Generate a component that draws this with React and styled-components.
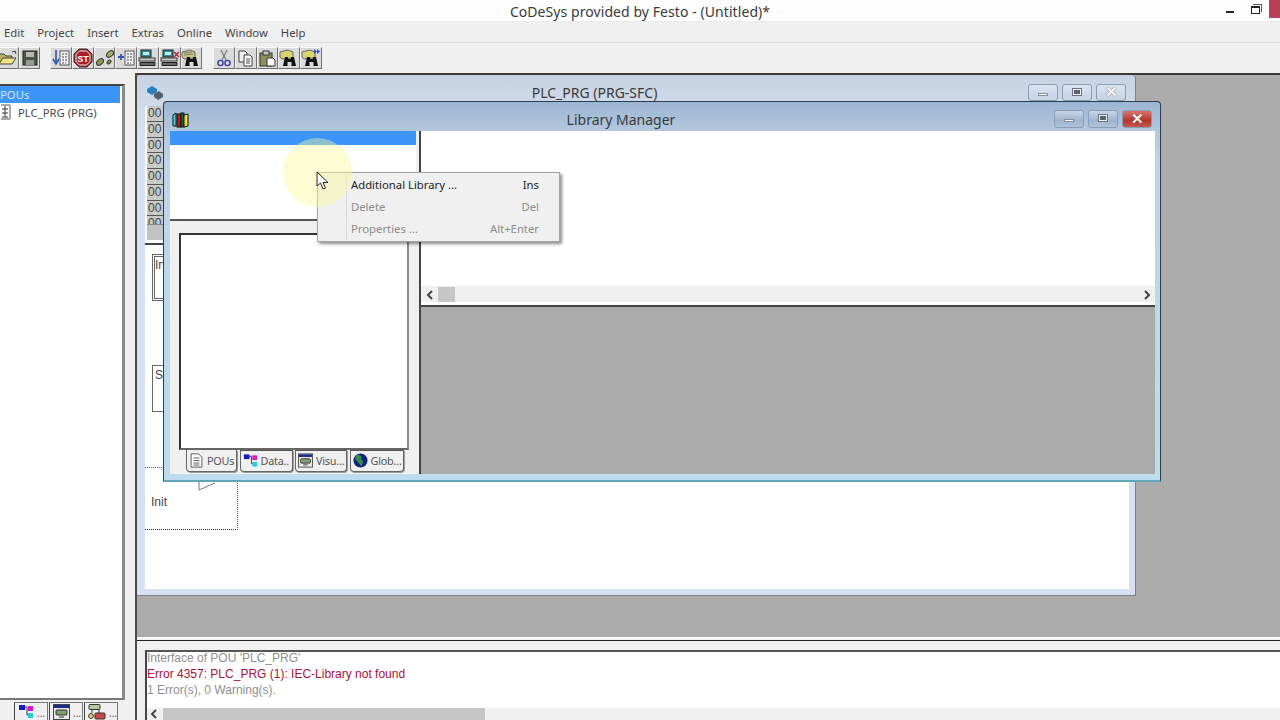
import React from 'react'
import styled, { createGlobalStyle } from 'styled-components'

const uiFont = `"Noto Sans", "Open Sans", sans-serif`
const arial = `"Liberation Sans", Arial, sans-serif`

const Global = createGlobalStyle`
  html, body { margin: 0; padding: 0; background: #f0f0f0; }
  * { box-sizing: border-box; }
  svg { flex: none; }
`
const Screen = styled.div`
  position: relative;
  width: 1280px;
  height: 720px;
  overflow: hidden;
  display: flex;
  flex-direction: column;
  font-family: ${uiFont};
  font-size: 11.3px;
  color: #3c3c3c;
  background: #f0f0f0;
`
const TitleBar = styled.div`
  position: relative;
  height: 22px;
  flex: none;
  display: flex;
  align-items: center;
  justify-content: center;
  padding-top: 1px;
  background: #fdfdfd;
  border-bottom: 1px solid #ebebee;
  font-size: 14px;
  letter-spacing: 0.07px;
  color: #3a3a3a;
`
const Controls = styled.div`
  position: absolute;
  top: 0;
  right: 0;
  display: flex;
  align-items: flex-start;
`
const MinGlyph = styled.div`
  width: 8px;
  height: 2px;
  margin: 11px 17px 0 0;
  background: #222;
`
const RestoreGlyph = styled.div`
  position: relative;
  width: 9px;
  height: 8px;
  margin: 6px 9px 0 0;
  border: 1px solid #222;
  border-width: 2px 1px 1px 1px;
  &::after {
    content: '';
    position: absolute;
    top: -4px;
    right: -3px;
    width: 8px;
    height: 7px;
    border: 1px solid #555;
    border-left: 0;
    border-bottom-width: 0;
  }
`
const CloseBox = styled.div`
  width: 11px;
  height: 18px;
  background: #b93f55;
`
const MenuBar = styled.div`
  height: 21px;
  flex: none;
  display: flex;
  align-items: center;
  gap: 13px;
  padding-left: 4px;
  background: #f0f0f0;
  border-bottom: 1px solid #dcdcdc;
`
const MenuItem = styled.span`
  color: #444;
`
const Toolbar = styled.div`
  height: 30px;
  flex: none;
  display: flex;
  align-items: flex-start;
  padding-top: 4px;
  background: #f0f0f0;
`
const ToolGroup = styled.div`
  display: flex;
  margin-left: ${p => p.$gap}px;
`
const ToolButton = styled.div`
  width: 21.7px;
  height: 22px;
  display: flex;
  align-items: center;
  justify-content: center;
  background: #dadada;
  border: 1px solid;
  border-color: #f4f4f4 #707070 #707070 #f4f4f4;
`
const Body = styled.div`
  flex: 1;
  min-height: 0;
  display: flex;
`
const Sidebar = styled.div`
  width: 137px;
  flex: none;
  display: flex;
  flex-direction: column;
  padding-top: 11px;
  background: #f0f0f0;
  border-right: 2px solid #4a4a4a;
`
const Tree = styled.div`
  width: 125px;
  height: 618px;
  padding-right: 2px;
  background: #fff;
  border-top: 2px solid #444;
  border-right: 3px solid #8a8a8a;
  border-bottom: 2px solid #777;
`
const TreeRoot = styled.div`
  height: 17px;
  line-height: 17px;
  background: #3c96f8;
  color: #d5e8ff;
`
const TreeItem = styled.div`
  display: flex;
  align-items: center;
  gap: 7px;
  height: 18px;
  color: #484848;
`
const SideTabs = styled.div`
  display: flex;
  gap: 1px;
  padding: 2px 0 0 14px;
`
const SideTab = styled.div`
  width: 34px;
  height: 18px;
  display: flex;
  gap: 3px;
  padding: 1px 0 0 3px;
  background: #f0f0f0;
  border: 1px solid #777;
  border-bottom: 0;
  border-left-color: #444;
  font-size: 10px;
  line-height: 18px;
  color: #555;
`
const Right = styled.div`
  flex: 1;
  min-width: 0;
  display: flex;
  flex-direction: column;
`
const Workspace = styled.div`
  position: relative;
  flex: 1;
  min-height: 0;
  background: #ababab;
  border-top: 2px solid #3a3a3a;
`
const PlcWindow = styled.div`
  position: absolute;
  left: 0;
  top: 0;
  width: 999px;
  height: 521px;
  display: flex;
  flex-direction: column;
  background: linear-gradient(#c7d3e2, #d7e0f0 60px);
  border-right: 1px solid #7d7d85;
  border-bottom: 1px solid #7d7d85;
  border-radius: 4px 4px 0 0;
`
const PlcTitle = styled.div`
  position: relative;
  height: 31px;
  flex: none;
  padding: 8px 83px 0 0;
  text-align: center;
  font-size: 14px;
  line-height: 20px;
  color: #3a3a3a;
`
const WindowIcon = styled.div`
  position: absolute;
  left: ${p => p.$left}px;
  top: ${p => p.$top}px;
  line-height: 0;
`
const WinButtons = styled.div`
  position: absolute;
  top: ${p => p.$top}px;
  right: ${p => p.$right}px;
  display: flex;
  gap: 4px;
`
const WinButton = styled.div`
  width: 30px;
  height: ${p => p.$h}px;
  display: flex;
  align-items: center;
  justify-content: center;
  border: 1px solid #8b9db3;
  border-radius: 3px;
  background: ${p => (p.$close
    ? 'linear-gradient(#d9736b, #b5352c 60%, #c55a50)'
    : p.$faded ? 'linear-gradient(#dbe4f0, #c4d2e4)' : 'linear-gradient(#c8d6e8, #9db4cf 60%, #b0c3da)')};
`
const MinMark = styled.div`
  width: 10px;
  height: 3px;
  margin-top: 3px;
  background: #f3f4f6;
  border: 1px solid #8a909a;
`
const MaxMark = styled.div`
  width: 10px;
  height: 8px;
  margin-top: -2px;
  border: 2px solid #eef0f3;
  outline: 1px solid #6a7180;
  outline-offset: -1px;
  background: #5a6270;
`
const XMark = styled.span`
  margin-top: -2px;
  font-family: ${arial};
  font-size: 15px;
  font-weight: bold;
  line-height: 1;
  color: ${p => (p.$faded ? '#fff' : '#f4f4f4')};
  text-shadow: 0 0 1px ${p => (p.$faded ? '#222' : '#444')};
`
const PlcClient = styled.div`
  position: relative;
  flex: 1;
  margin: 0 6px 6px 8px;
  background: #fff;
  display: flex;
  flex-direction: column;
`
const LineNumbers = styled.div`
  width: 60px;
  margin-left: 2px;
  height: 118px;
  overflow: hidden;
  background: #c9c9c9;
`
const LineNumber = styled.div`
  height: 15.75px;
  line-height: 14px;
  padding-left: 1px;
  font-family: ${arial};
  font-size: 12px;
  color: #444;
  border-bottom: 1px solid #555;
`
const GutterFoot = styled.div`
  width: 60px;
  height: 16px;
  margin-left: 2px;
  background: #c2c2c2;
  border-top: 1px solid #888;
`
const NumberRule = styled.div`
  height: 2px;
  margin-top: 3px;
  background: #444;
`
const StepBox = styled.div`
  position: absolute;
  left: 7px;
  top: ${p => p.$top}px;
  width: 40px;
  height: 47px;
  padding: ${p => (p.$initial ? '1px 0 0 0' : '2px 0 0 2px')};
  border: ${p => (p.$initial ? '3px double #666' : '1px solid #666')};
  font-family: ${arial};
  font-size: 12px;
  color: #444;
`
const InitStep = styled.div`
  position: absolute;
  left: 0;
  top: 361px;
  width: 93px;
  height: 63px;
  padding: 27px 0 0 6px;
  border-top: 1px dotted #555;
  border-right: 1px dotted #555;
  border-bottom: 1px dotted #333;
  font-family: ${arial};
  font-size: 12px;
  color: #444;
`
const StepMark = styled.div`
  position: absolute;
  left: 45px;
  top: 374px;
  line-height: 0;
`
const LibWindow = styled.div`
  position: absolute;
  left: 26px;
  top: 26px;
  width: 998px;
  height: 381px;
  display: flex;
  flex-direction: column;
  background: linear-gradient(#9cb5d2, #b4c8de 30px, #bcd4ec 60px, #bddcee);
  border: 1px solid #2b3d4a;
  border-bottom: 2px solid #5fa7b8;
  border-radius: 4px 4px 0 0;
`
const LibTitle = styled.div`
  position: relative;
  height: 29px;
  flex: none;
  padding: 8px 82px 0 0;
  text-align: center;
  font-size: 14px;
  line-height: 20px;
  color: #3a3a3a;
`
const LibClient = styled.div`
  flex: 1;
  min-height: 0;
  margin: 0 5px 6px 6px;
  display: flex;
  background: #f0f0f0;
`
const LibLeft = styled.div`
  width: 251px;
  flex: none;
  display: flex;
  flex-direction: column;
  border-right: 2px solid #444;
`
const LibTree = styled.div`
  width: 246px;
  height: 90px;
  flex: none;
  background: #fff;
  border-bottom: 2px solid #555;
`
const SelectedRow = styled.div`
  height: 14px;
  background: #3c96f8;
`
const LibList = styled.div`
  width: 230px;
  height: 217px;
  margin: 12px 0 0 9px;
  background: #fff;
  border: 2px solid;
  border-color: #333 #8a8a8a #666 #333;
`
const LibTabs = styled.div`
  display: flex;
  gap: 2.5px;
  padding-left: 16px;
`
const LibTab = styled.div`
  width: ${p => p.$w}px;
  height: 22px;
  display: flex;
  align-items: center;
  gap: 3px;
  padding: 0 0 1px 2px;
  overflow: hidden;
  white-space: nowrap;
  font-size: 10.8px;
  letter-spacing: -0.2px;
  color: #555;
  background: #f0f0f0;
  border: 1px solid #666;
  border-top: ${p => (p.$active ? '0' : '1px solid #555')};
  border-radius: 0 0 4px 4px;
  box-shadow: 1px 1px 0 #999;
  svg {
    width: 15px;
    height: 15px;
  }
`
const LibRight = styled.div`
  flex: 1;
  min-width: 0;
  display: flex;
  flex-direction: column;
  background: #ababab;
`
const LibDetail = styled.div`
  height: 155px;
  flex: none;
  background: #fff;
`
const ScrollStrip = styled.div`
  height: 21px;
  flex: none;
  display: flex;
  align-items: center;
  justify-content: space-between;
  padding: 1px 4px 3px 5px;
  background: linear-gradient(#f0f0f0 16px, #fff 16px);
  border-bottom: 2px solid #444;
  line-height: 0;
`
const ThumbGroup = styled.div`
  display: flex;
  gap: 4px;
  align-items: center;
`
const HThumb = styled.div`
  width: 17px;
  height: 15px;
  background: #c6c6c6;
`
const Divider = styled.div`
  height: 5px;
  flex: none;
  background: linear-gradient(#ababab 1px, #fafafa 1px, #fafafa 3px, #f0f0f0 3px);
  border-bottom: 1px solid #222;
`
const MessagePane = styled.div`
  height: 79px;
  flex: none;
  padding: 9px 0 0 8px;
  background: #f0f0f0;
`
const MessageBox = styled.div`
  height: 100%;
  display: flex;
  flex-direction: column;
  background: #fff;
  border-top: 2px solid #555;
  border-left: 2px solid #444;
`
const Messages = styled.div`
  flex: 1;
  margin-top: -2px;
  font-family: ${arial};
  font-size: 12px;
  line-height: 16px;
`
const Message = styled.div`
  color: ${p => (p.$error ? '#a8123a' : '#8f8f8f')};
`
const BottomScroll = styled.div`
  height: 12px;
  flex: none;
  display: flex;
  align-items: center;
  gap: 5px;
  padding-left: 3px;
  background: #f0f0f0;
`
const BottomThumb = styled.div`
  width: 322px;
  height: 12px;
  background: #c6c6c6;
`
const ContextMenu = styled.div`
  position: absolute;
  left: 317px;
  top: 172px;
  width: 243px;
  height: 70px;
  background: #f0f0f0;
  border: 1px solid #a4a4a4;
  box-shadow: 2px 2px 3px rgba(0, 0, 0, 0.45);
  &::before {
    content: '';
    position: absolute;
    left: 28px;
    top: 1px;
    bottom: 1px;
    width: 1px;
    background: #dcdcdc;
  }
`
const MenuRow = styled.div`
  height: 22px;
  display: flex;
  align-items: center;
  justify-content: space-between;
  padding: 0 20px 0 33px;
  color: ${p => (p.$disabled ? '#8c8c8c' : '#222')};
`
const Halo = styled.div`
  position: absolute;
  left: 283px;
  top: 138px;
  width: 69px;
  height: 69px;
  border-radius: 50%;
  background: radial-gradient(circle, rgba(250, 250, 150, 0.42) 78%, rgba(250, 250, 150, 0.05) 100%);
`
const Cursor = styled.svg`
  position: absolute;
  left: 316px;
  top: 171px;
`

const Open = () => (
  <svg width="20" height="16" viewBox="0 0 20 16">
    <path d="M14 2 L17 1 L18 4" fill="none" stroke="#333" />
    <path d="M1 4 H6 L8 6 H14 V13 H1 Z" fill="#b3b35a" stroke="#444" />
    <path d="M1 14 L5 8 H18 L14 14 Z" fill="#f2e484" stroke="#444" />
  </svg>
)
const Save = () => (
  <svg width="16" height="16" viewBox="0 0 16 16">
    <rect x="1" y="1" width="14" height="14" fill="#4a5545" stroke="#222" />
    <rect x="4" y="2" width="8" height="5" fill="#b8b8b0" />
    <rect x="4" y="10" width="8" height="5" fill="#9a9a92" />
  </svg>
)
const ListStep = ({ arrow }) => (
  <svg width="18" height="18" viewBox="0 0 18 18">
    <rect x="8" y="2" width="9" height="14" fill="#f4f4f4" stroke="#555" />
    <path d="M10 5h5M10 8h5M10 11h5M10 14h4" stroke="#444" strokeDasharray="2 1" />
    {arrow === 'down'
      ? <path d="M4 1 V13 M1 10 L4 15 L7 10" fill="none" stroke="#2f55b5" strokeWidth="1.6" />
      : <path d="M1 8 H7 M4 5 V11" stroke="#2f55b5" strokeWidth="1.8" />}
  </svg>
)
const Stop = () => (
  <svg width="20" height="20" viewBox="0 0 20 20">
    <path d="M6 1 H14 L19 6 V14 L14 19 H6 L1 14 V6 Z" fill="#a81e2a" stroke="#333" />
    <path d="M6.5 3 H13.5 L17 6.5 V13.5 L13.5 17 H6.5 L3 13.5 V6.5 Z" fill="none" stroke="#eee" />
    <text x="10" y="13.5" textAnchor="middle" fontSize="9" fontWeight="bold" fontFamily="Liberation Sans" fill="#fff">ST</text>
  </svg>
)
const Steps = () => (
  <svg width="20" height="18" viewBox="0 0 20 18">
    <ellipse cx="5" cy="13" rx="4" ry="2.6" transform="rotate(-40 5 13)" fill="#8c9a50" stroke="#333" />
    <ellipse cx="15" cy="5" rx="4" ry="2.6" transform="rotate(-40 15 5)" fill="#a7a96a" stroke="#333" />
    <ellipse cx="14" cy="13" rx="2.4" ry="1.6" transform="rotate(-40 14 13)" fill="#8c9a50" stroke="#333" />
  </svg>
)
const Machine = ({ cross }) => (
  <svg width="20" height="18" viewBox="0 0 20 18">
    <rect x="3" y="1" width="10" height="7" fill="#2f8f9a" stroke="#222" />
    <rect x="5" y="3" width="6" height="3" fill="#cde8ea" />
    <rect x="1" y="9" width="16" height="3" fill="#cfcfcf" stroke="#333" />
    <path d="M2 13.5h15v3H2z" fill="#666" stroke="#222" />
    {cross && <path d="M14 3 L19 8 M19 3 L14 8" stroke="#b52020" strokeWidth="1.4" />}
  </svg>
)
const Binoculars = ({ folder, next }) => (
  <svg width="20" height="20" viewBox="0 0 20 20">
    <path d="M1 4 L9 2 L14 4 V10 L3 11 L1 9 Z" fill={folder ? '#c9c77c' : '#d7d56c'} stroke="#666" />
    {folder && <path d="M3 5 L11 4 M3 7 L12 6" stroke="#777" />}
    <path d="M6 9 H9 V11 H12 V9 H15 L17 18 H12.5 V14 H8.5 V18 H4 Z" fill="#111" />
    {next && <path d="M13 1 V6 L16 3.5 Z M16 1 V6 L19 3.5 Z" fill="#2f4fb5" />}
  </svg>
)
const Scissors = () => (
  <svg width="16" height="18" viewBox="0 0 16 18">
    <path d="M5 1 L10 11 M11 1 L6 11" stroke="#777" strokeWidth="1.2" />
    <circle cx="4.5" cy="14" r="2.6" fill="none" stroke="#3a3a9c" strokeWidth="1.4" />
    <circle cx="11.5" cy="14" r="2.6" fill="none" stroke="#3a3a9c" strokeWidth="1.4" />
  </svg>
)
const Copy = () => (
  <svg width="17" height="17" viewBox="0 0 17 17">
    <path d="M2 1 H8 L10 3 V12 H2 Z" fill="#f0f0f0" stroke="#444" />
    <path d="M7 5 H13 L15 7 V16 H7 Z" fill="#fafafa" stroke="#444" />
    <path d="M9 9h4M9 11h4M9 13h4" stroke="#555" />
  </svg>
)
const Paste = () => (
  <svg width="17" height="17" viewBox="0 0 17 17">
    <rect x="1" y="3" width="12" height="13" fill="#8f8f58" stroke="#333" />
    <rect x="4" y="1" width="6" height="4" fill="#c8c8c8" stroke="#333" />
    <path d="M8 8 H14 L16 10 V16 H8 Z" fill="#fafafa" stroke="#333" />
  </svg>
)
const DiagramIcon = () => (
  <svg width="16" height="15" viewBox="0 0 16 15">
    <rect x="1" y="1" width="6" height="5" fill="#1818c8" />
    <rect x="10" y="2" width="5" height="5" fill="#d818c8" />
    <rect x="10" y="9" width="5" height="5" fill="#20d0d8" />
    <path d="M7 3 H9 V11 H10" fill="none" stroke="#333" />
  </svg>
)
const VisuIcon = () => (
  <svg width="17" height="16" viewBox="0 0 17 16">
    <rect x="0.5" y="0.5" width="16" height="15" fill="#e8e8e8" stroke="#444" />
    <rect x="1" y="1" width="15" height="3" fill="#1a2a8c" />
    <rect x="3" y="6" width="11" height="5" rx="1" fill="#7fa070" stroke="#333" />
    <path d="M6 13h5" stroke="#333" />
  </svg>
)
const GlobeIcon = () => (
  <svg width="17" height="17" viewBox="0 0 17 17">
    <circle cx="8.5" cy="8.5" r="8" fill="#12237e" />
    <path d="M5 2 C9 2 11 5 9 7 C12 8 12 12 9 15 C7 12 6 10 3 8 C2 5 3 3 5 2Z" fill="#2e8e50" />
  </svg>
)
const NetIcon = () => (
  <svg width="18" height="16" viewBox="0 0 18 16">
    <rect x="1" y="0.5" width="11" height="5" rx="1" fill="#b6c7a0" stroke="#333" />
    <rect x="7" y="9" width="10" height="6" rx="1" fill="#c84a4a" stroke="#333" />
    <circle cx="3" cy="12" r="2.4" fill="#e7d06a" stroke="#333" />
    <path d="M4 6 V9 M11 6 V9" stroke="#333" />
  </svg>
)
const PageIcon = () => (
  <svg width="15" height="18" viewBox="0 0 15 18">
    <path d="M1 1 H10 L14 5 V17 H1 Z" fill="#fafafa" stroke="#444" />
    <path d="M4 6h7M4 9h7M4 12h7M4 14.5h7" stroke="#444" />
  </svg>
)
const PrgIcon = () => (
  <svg width="11" height="16" viewBox="0 0 11 16">
    <path d="M1 1 H10 V15 H1" fill="#fff" stroke="#555" />
    <path d="M2 5 H8 M5 2 V13 M2 9 H8 M2 13 H8" stroke="#333" />
  </svg>
)
const BooksIcon = () => (
  <svg width="17" height="17" viewBox="0 0 17 17">
    <path d="M1 4 L4 2 V15 H1 Z" fill="#55d8d8" stroke="#111" />
    <rect x="5" y="3" width="4" height="13" fill="#b0202a" stroke="#111" />
    <rect x="9" y="2" width="3" height="14" fill="#1f6d2c" stroke="#111" />
    <path d="M12 4 L16 3 V15 L12 16 Z" fill="#ecdc3c" stroke="#111" />
  </svg>
)
const CubeIcon = () => (
  <svg width="18" height="16" viewBox="0 0 18 16">
    <path d="M8 9 L13 6 L17 9 L17 12 L12 15 L8 12 Z" fill="#55606e" />
    <path d="M1 4 L6 1 L11 4 L11 7 L6 10 L1 7 Z" fill="#2b7fc5" />
  </svg>
)
const ArrowLeft = () => (
  <svg width="8" height="10" viewBox="0 0 8 10">
    <path d="M6 1 L2 5 L6 9" fill="none" stroke="#444" strokeWidth="2" />
  </svg>
)
const ArrowRight = () => (
  <svg width="8" height="10" viewBox="0 0 8 10">
    <path d="M2 1 L6 5 L2 9" fill="none" stroke="#444" strokeWidth="2" />
  </svg>
)

const menus = ['Edit', 'Project', 'Insert', 'Extras', 'Online', 'Window', 'Help']
const lineRows = Array.from({ length: 8 }, (_, i) => i)

const WindowButtons = ({ top, right, h, faded }) => (
  <WinButtons $top={top} $right={right}>
    <WinButton $h={h} $faded={faded}><MinMark /></WinButton>
    <WinButton $h={h} $faded={faded}><MaxMark /></WinButton>
    <WinButton $h={h} $faded={faded} $close={!faded}>
      <XMark $faded={faded}>✕</XMark>
    </WinButton>
  </WinButtons>
)

export default function App () {
  return (
    <Screen>
      <Global />
      <TitleBar>
        CoDeSys provided by Festo - (Untitled)*
        <Controls>
          <MinGlyph />
          <RestoreGlyph />
          <CloseBox />
        </Controls>
      </TitleBar>
      <MenuBar>
        {menus.map(m => <MenuItem key={m}>{m}</MenuItem>)}
      </MenuBar>
      <Toolbar>
        <ToolGroup $gap={-3}>
          <ToolButton><Open /></ToolButton>
          <ToolButton><Save /></ToolButton>
        </ToolGroup>
        <ToolGroup $gap={10}>
          <ToolButton><ListStep arrow="down" /></ToolButton>
          <ToolButton><Stop /></ToolButton>
          <ToolButton><Steps /></ToolButton>
          <ToolButton><ListStep arrow="plus" /></ToolButton>
          <ToolButton><Machine /></ToolButton>
          <ToolButton><Machine cross /></ToolButton>
          <ToolButton><Binoculars folder /></ToolButton>
        </ToolGroup>
        <ToolGroup $gap={11}>
          <ToolButton><Scissors /></ToolButton>
          <ToolButton><Copy /></ToolButton>
          <ToolButton><Paste /></ToolButton>
          <ToolButton><Binoculars /></ToolButton>
          <ToolButton><Binoculars next /></ToolButton>
        </ToolGroup>
      </Toolbar>
      <Body>
        <Sidebar>
          <Tree>
            <TreeRoot>POUs</TreeRoot>
            <TreeItem><PrgIcon />PLC_PRG (PRG)</TreeItem>
          </Tree>
          <SideTabs>
            <SideTab><DiagramIcon />...</SideTab>
            <SideTab><VisuIcon />...</SideTab>
            <SideTab><NetIcon />...</SideTab>
          </SideTabs>
        </Sidebar>
        <Right>
          <Workspace>
            <PlcWindow>
              <PlcTitle>
                <WindowIcon $left={9} $top={10}><CubeIcon /></WindowIcon>
                PLC_PRG (PRG-SFC)
                <WindowButtons top={9} right={9} h={17} faded />
              </PlcTitle>
              <PlcClient>
                <LineNumbers>
                  {lineRows.map(i => <LineNumber key={i}>00</LineNumber>)}
                </LineNumbers>
                <GutterFoot />
                <NumberRule />
                <StepBox $initial $top={148}>In</StepBox>
                <StepBox $top={259}>S</StepBox>
                <InitStep>Init</InitStep>
                <StepMark>
                  <svg width="26" height="12" viewBox="0 0 26 12">
                    <path d="M1 1 H9 V10 L25 3" fill="none" stroke="#777" />
                  </svg>
                </StepMark>
              </PlcClient>
            </PlcWindow>
            <LibWindow>
              <LibTitle>
                <WindowIcon $left={8} $top={9}><BooksIcon /></WindowIcon>
                Library Manager
                <WindowButtons top={8} right={8} h={18} />
              </LibTitle>
              <LibClient>
                <LibLeft>
                  <LibTree><SelectedRow /></LibTree>
                  <LibList />
                  <LibTabs>
                    <LibTab $w={51} $active><PageIcon />POUs</LibTab>
                    <LibTab $w={53}><DiagramIcon />Data..</LibTab>
                    <LibTab $w={52}><VisuIcon />Visu...</LibTab>
                    <LibTab $w={54}><GlobeIcon />Glob...</LibTab>
                  </LibTabs>
                </LibLeft>
                <LibRight>
                  <LibDetail />
                  <ScrollStrip>
                    <ThumbGroup>
                      <ArrowLeft />
                      <HThumb />
                    </ThumbGroup>
                    <ArrowRight />
                  </ScrollStrip>
                </LibRight>
              </LibClient>
            </LibWindow>
          </Workspace>
          <Divider />
          <MessagePane>
            <MessageBox>
              <Messages>
                <Message>Interface of POU 'PLC_PRG'</Message>
                <Message $error>Error 4357: PLC_PRG (1): IEC-Library not found</Message>
                <Message>1 Error(s), 0 Warning(s).</Message>
              </Messages>
              <BottomScroll>
                <ArrowLeft />
                <BottomThumb />
              </BottomScroll>
            </MessageBox>
          </MessagePane>
        </Right>
      </Body>
      <ContextMenu>
        <MenuRow><span>Additional Library ...</span><span>Ins</span></MenuRow>
        <MenuRow $disabled><span>Delete</span><span>Del</span></MenuRow>
        <MenuRow $disabled><span>Properties ...</span><span>Alt+Enter</span></MenuRow>
      </ContextMenu>
      <Halo />
      <Cursor width="14" height="20" viewBox="0 0 14 20">
        <path d="M1 1 V15 L4.5 12 L7 18 L9.5 17 L7 11.5 H12 Z" fill="#fff" stroke="#222" />
      </Cursor>
    </Screen>
  )
}
